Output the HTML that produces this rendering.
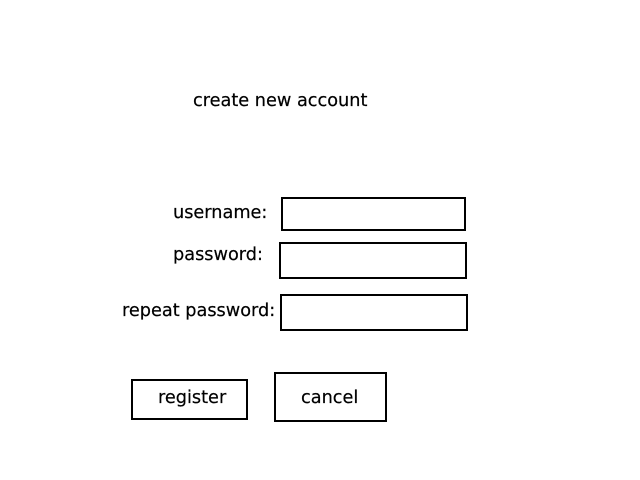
<html><head><style>
body{margin:0;width:640px;height:480px;background:#fff;position:relative;font-family:"DejaVu Sans","Liberation Sans",sans-serif;font-size:17.7px;color:#000}
.t{position:absolute;line-height:20px;white-space:nowrap;-webkit-text-stroke:0.2px #000}
.b{position:absolute;border:2px solid #000;box-sizing:border-box}
</style></head><body>
<div class="t" style="left:193px;top:91px">create new account</div>
<div class="t" style="left:173px;top:203px">username:</div>
<div class="t" style="left:173px;top:245px">password:</div>
<div class="t" style="left:122px;top:301px">repeat password:</div>
<div class="b" style="left:281px;top:197px;width:185px;height:34px"></div>
<div class="b" style="left:279px;top:242px;width:188px;height:37px"></div>
<div class="b" style="left:280px;top:294px;width:188px;height:37px"></div>
<div class="b" style="left:131px;top:379px;width:117px;height:41px"></div>
<div class="b" style="left:274px;top:372px;width:113px;height:50px"></div>
<div class="t" style="left:158px;top:388px">register</div>
<div class="t" style="left:301px;top:388px">cancel</div>
</body></html>
